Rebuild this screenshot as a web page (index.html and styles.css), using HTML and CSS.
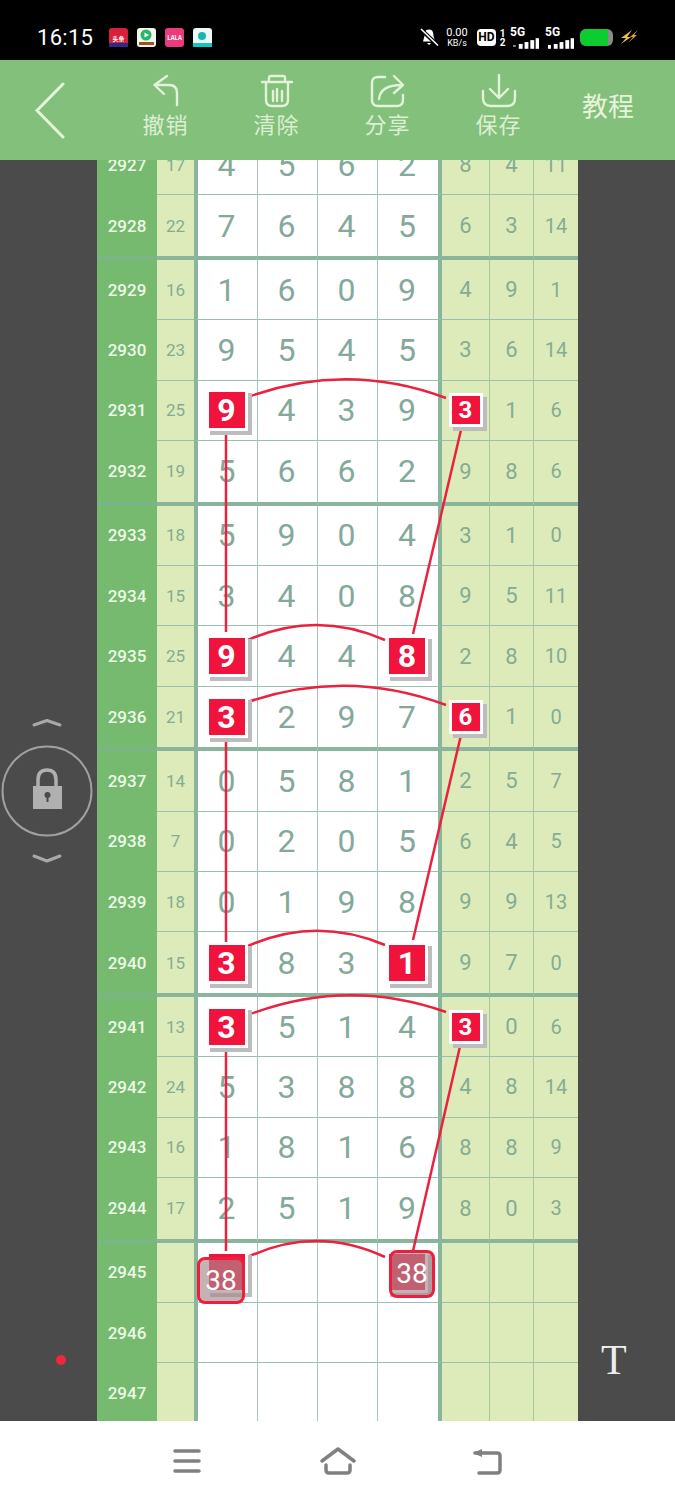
FILE: index.html
```html
<!DOCTYPE html>
<html lang="zh">
<head>
<meta charset="utf-8">
<title>教程</title>
<link rel="stylesheet" href="styles.css">
</head>
<body>
<div class="phone">
  <header class="status">
    <div class="time">16:15</div>
    <div class="apps">
      <svg class="app" viewBox="0 0 19 19"><rect width="19" height="19" rx="3" fill="#d8203c"/><rect y="15" width="19" height="4" fill="#2b2b8a"/><text class="app-text" x="9.500" y="13" text-anchor="middle">头条</text></svg>
      <svg class="app" viewBox="0 0 19 19"><rect width="19" height="19" rx="3" fill="#f4f4ee"/><circle cx="9" cy="7" r="5.500" fill="#25b864"/><path d="M7.500 4.500 L12 7 L7.500 9.500Z" fill="#fff"/><rect x="2" y="14" width="15" height="3" fill="#a05020"/></svg>
      <svg class="app" viewBox="0 0 19 19"><rect width="19" height="19" rx="3" fill="#ea3b7d"/><text class="app-text" x="9.500" y="12" text-anchor="middle">LALA</text></svg>
      <svg class="app" viewBox="0 0 19 19"><rect width="19" height="19" rx="3" fill="#eef8f6"/><circle cx="9" cy="8" r="4" fill="#18b8a8"/><rect y="15" width="19" height="4" fill="#10c8c0"/></svg>
    </div>
    <div class="sys">
      <svg class="bell" viewBox="0 0 19 19"><path d="M9 1.500 C5 1.500 4.500 5 4.500 8 L3 13.500 H15 L13.500 8 C13.500 5 13 1.500 9 1.500Z M7 15 H11 L9 17Z" fill="#fff"/><path d="M1 1.500 L18 17.500" stroke="#000" stroke-width="4"/><path d="M1 1 L18 17.500" stroke="#fff" stroke-width="1.600"/></svg>
      <div class="speed"><span class="speed-num">0.00</span><span class="speed-unit">KB/s</span></div>
      <div class="hd">HD</div>
      <div class="sim-no"><span>1</span><span>2</span></div>
      <div class="net"><span class="net-label">5G</span><svg class="bars" viewBox="0 0 27 11"><rect x="0" y="7" width="3" height="2" fill="#888"/><rect x="6" y="6" width="4" height="5" fill="#fff"/><rect x="12" y="4" width="4" height="7" fill="#fff"/><rect x="18" y="2" width="4" height="9" fill="#fff"/><rect x="23.500" y="0" width="3.500" height="11" fill="#fff"/></svg></div>
      <div class="net"><span class="net-label">5G</span><svg class="bars" viewBox="0 0 27 11"><rect x="0" y="7" width="3" height="4" fill="#fff"/><rect x="6" y="6" width="4" height="5" fill="#fff"/><rect x="12" y="4" width="4" height="7" fill="#fff"/><rect x="18" y="2" width="4" height="9" fill="#fff"/><rect x="23.500" y="0" width="3.500" height="11" fill="#fff"/></svg></div>
      <div class="battery"><div class="battery-fill"></div></div>
      <svg class="bolt" viewBox="0 0 19 16"><path d="M12 1 L1 9 H6 L1 15 L11 8 H7Z" fill="#f0c040"/><path d="M18 1 L10 8 H13 L8 14 L17 6 H14Z" fill="#e0a030"/></svg>
    </div>
  </header>

  <nav class="toolbar">
    <button class="back" aria-label="返回">
      <svg class="back-icon" viewBox="0 0 32 58"><path d="M29 2 L3 28.500 L29 55" fill="none" stroke="#e6f4da" stroke-width="3" stroke-linecap="round"/></svg>
    </button>
    <div class="tool">
      <svg class="tool-icon" viewBox="0 0 36 34"><path d="M19 2 L6.500 11 L16 20 M6.500 11 H21 C26 11 29 14 29 19 V31" fill="none" stroke="#e3f3d8" stroke-width="2.400" stroke-linecap="round" stroke-linejoin="round"/></svg>
      <span class="tool-label">撤销</span>
    </div>
    <div class="tool">
      <svg class="tool-icon" viewBox="0 0 36 34"><path d="M3 8 H33 M10 8 V3.500 Q10 2 12 2 H24 Q26 2 26 3.500 V8 M7 8 V26 Q7 32 13 32 H23 Q29 32 29 26 V8 M14 17 V27 M18 15 V27 M23 17 V27" fill="none" stroke="#e3f3d8" stroke-width="2.400" stroke-linecap="round"/></svg>
      <span class="tool-label">清除</span>
    </div>
    <div class="tool">
      <svg class="tool-icon" viewBox="0 0 36 34"><path d="M15 3 H8 Q2 3 2 9 V26 Q2 32 8 32 H27 Q33 32 33 26 V21 M9 25 C10 15 18 11 32 11 M24 2 L33 11 L24 19" fill="none" stroke="#e3f3d8" stroke-width="2.400" stroke-linecap="round" stroke-linejoin="round"/></svg>
      <span class="tool-label">分享</span>
    </div>
    <div class="tool">
      <svg class="tool-icon" viewBox="0 0 36 34"><path d="M18 1 V23 M9 15 L18 24 L27 15 M2 17 V24 Q2 32 10 32 H26 Q34 32 34 24 V17" fill="none" stroke="#e3f3d8" stroke-width="2.400" stroke-linecap="round" stroke-linejoin="round"/></svg>
      <span class="tool-label">保存</span>
    </div>
    <div class="tool-text">教程</div>
  </nav>

  <main class="stage">
    <aside class="side-left">
      <svg class="lock" viewBox="0 0 94 150">
        <path d="M34 5 L47 0.500 L60 5" fill="none" stroke="#a8a8a8" stroke-width="3" stroke-linecap="round" stroke-linejoin="round"/>
        <circle cx="47" cy="71" r="44.500" fill="none" stroke="#a0a0a0" stroke-width="2"/>
        <path d="M38 72 V60 Q38 50 47 50 Q56 50 56 60 V72" fill="none" stroke="#b0b0b0" stroke-width="3.500"/>
        <rect x="33" y="66" width="29" height="23" fill="#b0b0b0"/>
        <circle cx="47.500" cy="75" r="3" fill="#4a4a4a"/><rect x="46.500" y="75" width="2" height="7" fill="#4a4a4a"/>
        <path d="M34 136 L47 141 L60 136" fill="none" stroke="#a8a8a8" stroke-width="3" stroke-linecap="round" stroke-linejoin="round"/>
      </svg>
      <div class="dot"></div>
    </aside>

    <section class="board">
      <div class="sheet">
        <div class="row"><div class="c-no">2927</div><div class="c-sum">17</div><div class="c-main first">4</div><div class="c-main">5</div><div class="c-main">6</div><div class="c-main last">2</div><div class="c-x a">8</div><div class="c-x b">4</div><div class="c-x d">11</div></div>
        <div class="row end"><div class="c-no">2928</div><div class="c-sum">22</div><div class="c-main first">7</div><div class="c-main">6</div><div class="c-main">4</div><div class="c-main last">5</div><div class="c-x a">6</div><div class="c-x b">3</div><div class="c-x d">14</div></div>

        <div class="row"><div class="c-no">2929</div><div class="c-sum">16</div><div class="c-main first">1</div><div class="c-main">6</div><div class="c-main">0</div><div class="c-main last">9</div><div class="c-x a">4</div><div class="c-x b">9</div><div class="c-x d">1</div></div>
        <div class="row"><div class="c-no">2930</div><div class="c-sum">23</div><div class="c-main first">9</div><div class="c-main">5</div><div class="c-main">4</div><div class="c-main last">5</div><div class="c-x a">3</div><div class="c-x b">6</div><div class="c-x d">14</div></div>
        <div class="row"><div class="c-no">2931</div><div class="c-sum">25</div><div class="c-main first"><span class="mark">9</span></div><div class="c-main">4</div><div class="c-main">3</div><div class="c-main last">9</div><div class="c-x a"><span class="mark small">3</span></div><div class="c-x b">1</div><div class="c-x d">6</div></div>
        <div class="row end"><div class="c-no">2932</div><div class="c-sum">19</div><div class="c-main first">5</div><div class="c-main">6</div><div class="c-main">6</div><div class="c-main last">2</div><div class="c-x a">9</div><div class="c-x b">8</div><div class="c-x d">6</div></div>

        <div class="row"><div class="c-no">2933</div><div class="c-sum">18</div><div class="c-main first">5</div><div class="c-main">9</div><div class="c-main">0</div><div class="c-main last">4</div><div class="c-x a">3</div><div class="c-x b">1</div><div class="c-x d">0</div></div>
        <div class="row"><div class="c-no">2934</div><div class="c-sum">15</div><div class="c-main first">3</div><div class="c-main">4</div><div class="c-main">0</div><div class="c-main last">8</div><div class="c-x a">9</div><div class="c-x b">5</div><div class="c-x d">11</div></div>
        <div class="row"><div class="c-no">2935</div><div class="c-sum">25</div><div class="c-main first"><span class="mark">9</span></div><div class="c-main">4</div><div class="c-main">4</div><div class="c-main last"><span class="mark">8</span></div><div class="c-x a">2</div><div class="c-x b">8</div><div class="c-x d">10</div></div>
        <div class="row end"><div class="c-no">2936</div><div class="c-sum">21</div><div class="c-main first"><span class="mark">3</span></div><div class="c-main">2</div><div class="c-main">9</div><div class="c-main last">7</div><div class="c-x a"><span class="mark small">6</span></div><div class="c-x b">1</div><div class="c-x d">0</div></div>

        <div class="row"><div class="c-no">2937</div><div class="c-sum">14</div><div class="c-main first">0</div><div class="c-main">5</div><div class="c-main">8</div><div class="c-main last">1</div><div class="c-x a">2</div><div class="c-x b">5</div><div class="c-x d">7</div></div>
        <div class="row"><div class="c-no">2938</div><div class="c-sum">7</div><div class="c-main first">0</div><div class="c-main">2</div><div class="c-main">0</div><div class="c-main last">5</div><div class="c-x a">6</div><div class="c-x b">4</div><div class="c-x d">5</div></div>
        <div class="row"><div class="c-no">2939</div><div class="c-sum">18</div><div class="c-main first">0</div><div class="c-main">1</div><div class="c-main">9</div><div class="c-main last">8</div><div class="c-x a">9</div><div class="c-x b">9</div><div class="c-x d">13</div></div>
        <div class="row end"><div class="c-no">2940</div><div class="c-sum">15</div><div class="c-main first"><span class="mark">3</span></div><div class="c-main">8</div><div class="c-main">3</div><div class="c-main last"><span class="mark">1</span></div><div class="c-x a">9</div><div class="c-x b">7</div><div class="c-x d">0</div></div>

        <div class="row"><div class="c-no">2941</div><div class="c-sum">13</div><div class="c-main first"><span class="mark">3</span></div><div class="c-main">5</div><div class="c-main">1</div><div class="c-main last">4</div><div class="c-x a"><span class="mark small">3</span></div><div class="c-x b">0</div><div class="c-x d">6</div></div>
        <div class="row"><div class="c-no">2942</div><div class="c-sum">24</div><div class="c-main first">5</div><div class="c-main">3</div><div class="c-main">8</div><div class="c-main last">8</div><div class="c-x a">4</div><div class="c-x b">8</div><div class="c-x d">14</div></div>
        <div class="row"><div class="c-no">2943</div><div class="c-sum">16</div><div class="c-main first">1</div><div class="c-main">8</div><div class="c-main">1</div><div class="c-main last">6</div><div class="c-x a">8</div><div class="c-x b">8</div><div class="c-x d">9</div></div>
        <div class="row end"><div class="c-no">2944</div><div class="c-sum">17</div><div class="c-main first">2</div><div class="c-main">5</div><div class="c-main">1</div><div class="c-main last">9</div><div class="c-x a">8</div><div class="c-x b">0</div><div class="c-x d">3</div></div>

        <div class="row"><div class="c-no">2945</div><div class="c-sum"></div><div class="c-main first"><span class="mark blank"></span><span class="pick pick-a">38</span></div><div class="c-main"></div><div class="c-main"></div><div class="c-main last"><span class="mark blank"></span><span class="pick pick-b">38</span></div><div class="c-x a"></div><div class="c-x b"></div><div class="c-x d"></div></div>
        <div class="row"><div class="c-no">2946</div><div class="c-sum"></div><div class="c-main first"></div><div class="c-main"></div><div class="c-main"></div><div class="c-main last"></div><div class="c-x a"></div><div class="c-x b"></div><div class="c-x d"></div></div>
        <div class="row"><div class="c-no">2947</div><div class="c-sum"></div><div class="c-main first"></div><div class="c-main"></div><div class="c-main"></div><div class="c-main last"></div><div class="c-x a"></div><div class="c-x b"></div><div class="c-x d"></div></div>
      </div>

      <svg class="links" viewBox="97 160 481 1261">
        <g fill="none" stroke="#e8223f" stroke-width="2.500">
          <path d="M248 397 Q347 361 446 398"/>
          <path d="M248 640 Q316 610 385 640"/>
          <path d="M248 702 Q347 668 446 705"/>
          <path d="M248 946 Q316 916 385 945"/>
          <path d="M248 1015 Q347 977 446 1012"/>
          <path d="M248 1257 Q316 1225 385 1257"/>
          <path d="M226 432 V632"/>
          <path d="M226 736 V942"/>
          <path d="M226 1048 V1256"/>
          <path d="M461 430 L413 634"/>
          <path d="M461 735 L413 940"/>
          <path d="M461 1042 L413 1251"/>
        </g>
      </svg>
    </section>

    <aside class="side-right"><div class="font-btn">T</div></aside>
  </main>

  <footer class="navbar">
    <svg class="nav-menu" viewBox="0 0 28 24"><path d="M2 2 H26 M2 12 H26 M2 22 H26" stroke="#808080" stroke-width="3.500" stroke-linecap="round"/></svg>
    <svg class="nav-home" viewBox="0 0 36 28"><path d="M2 14 L18 2 L34 14 M6 18 V23 Q6 26 9 26 H27 Q30 26 30 23 V18" fill="none" stroke="#808080" stroke-width="3.500" stroke-linecap="round" stroke-linejoin="round"/></svg>
    <svg class="nav-back" viewBox="0 0 32 28"><path d="M2 6 L11 2 V10Z" fill="#808080"/><path d="M4 6 H26 Q29 6 29 9 V23 Q29 26 26 26 H8" fill="none" stroke="#808080" stroke-width="3.500" stroke-linecap="round"/></svg>
  </footer>
</div>
</body>
</html>
```

FILE: styles.css
```css
* { box-sizing: border-box; }
html, body { margin: 0; padding: 0; }
body { font-family: "Roboto", "Noto Sans CJK SC", sans-serif; background: #fff; }
.phone { width: 675px; height: 1500px; display: flex; flex-direction: column; overflow: hidden; }

/* status bar */
.status { height: 60px; background: #000; color: #fff; display: flex; align-items: center; padding: 15px 0 0 37px; flex: none; }
.time { font-size: 22px; width: 72px; letter-spacing: .3px; }
.apps { display: flex; gap: 9px; }
.app { width: 19px; height: 19px; display: block; }
.app-text { font: 700 6px "Noto Sans CJK SC", sans-serif; fill: #fff; }
.sys { margin-left: 208px; display: flex; align-items: center; }
.bell { width: 19px; height: 19px; }
.speed { display: flex; flex-direction: column; align-items: center; width: 24px; margin-left: 6px; line-height: 10px; }
.speed-num { font-size: 11px; }
.speed-unit { font-size: 9px; }
.hd { width: 19px; height: 17px; background: #fff; color: #000; border-radius: 4px; font: 700 12px/17px "Roboto", sans-serif; text-align: center; margin-left: 8px; }
.sim-no { display: flex; flex-direction: column; font: 700 10px/9px "Roboto", sans-serif; width: 9px; margin-left: 2px; text-align: center; }
.net { position: relative; width: 28px; height: 22px; margin-left: 3px; }
.net-label { position: absolute; left: 0; top: -1px; font: 700 12px/12px "Roboto", sans-serif; }
.bars { position: absolute; left: 3px; top: 11px; width: 26px; height: 11px; }
.net + .net { margin-left: 7px; }
.battery { width: 33px; height: 17px; margin-left: 7px; background: #8a8a8a; border-radius: 6px; overflow: hidden; }
.battery-fill { width: 28px; height: 17px; background: #0ccc30; border-radius: 6px 2px 2px 6px; }
.bolt { width: 19px; height: 16px; margin-left: 7px; margin-top: -2px; }

/* toolbar */
.toolbar { height: 100px; background: #82c07b; display: flex; flex: none; }
.back { width: 110px; height: 100px; border: 0; background: none; padding: 22px 0 0 34px; display: flex; align-items: flex-start; }
.back-icon { width: 32px; height: 58px; display: block; }
.tool { width: 111px; display: flex; flex-direction: column; align-items: center; padding-top: 14px; }
.tool-icon { width: 36px; height: 34px; display: block; }
.tool-label { font: 400 22px/30px "Noto Sans CJK SC", sans-serif; color: #dcefd2; letter-spacing: 1px; }
.tool-text { width: 111px; padding-right: 3px; text-align: center; font: 400 26px/90px "Noto Sans CJK SC", sans-serif; color: #e6f4dc; }

/* main */
.stage { height: 1261px; display: flex; flex: none; background: #4b4b4b; overflow: hidden; }
.side-left { width: 97px; flex: none; padding-top: 560px; }
.lock { width: 94px; height: 150px; display: block; overflow: visible; }
.dot { width: 10px; height: 10px; border-radius: 50%; background: #f0263c; margin: 485px 0 0 56px; }
.side-right { width: 97px; flex: none; padding: 1175px 0 0 23px; }
.font-btn { font: 400 42px/50px "Liberation Serif", serif; color: #eee; }

.board { width: 481px; flex: none; position: relative; overflow: hidden; }
.sheet { margin-top: -25px; }
.row { display: flex; height: 60.4px; }
.row.end { height: 64.5px; }
.row > div { display: flex; align-items: center; justify-content: center; border-bottom: 1px solid #9dbfae; }
.row.end > div { border-bottom: 4px solid #8ab59d; }
.c-no { width: 60px; background: #75ba6f; color: #eef8e6; font: 500 17px "Roboto", sans-serif; }
.row > .c-no { border-bottom-color: #75ba6f; }
.row.end > .c-no { border-bottom-color: #7ab587; }
.c-sum { width: 37px; background: #dcebb9; color: #86ab93; font-size: 17px; }
.c-main { width: 60px; padding-right: 2px; background: #fff; color: #84a99b; font-size: 32px; border-left: 1px solid #a9c4ba; position: relative; }
.c-main.first { width: 63px; border-left: 4px solid #8ab59d; }
.c-main.last { width: 65px; border-right: 4px solid #8ab59d; }
.c-x { background: #dcebb9; color: #86ab93; font-size: 22px; border-left: 1px solid #a9c79d; }
.c-x.a { width: 47px; border-left: 0; }
.c-x.b { width: 44px; }
.c-x.d { width: 45px; font-size: 20px; }

.mark { position: relative; z-index: 2; width: 36px; height: 36px; background: #f0143c; color: #fff; font-weight: 700; font-size: 32px; line-height: 36px; text-align: center; box-shadow: 0 0 0 3px #fff, 4px 4px 0 3px #bdbdbd; }
.mark.small { width: 28px; height: 28px; font-size: 24px; line-height: 28px; }
.pick { position: absolute; z-index: 3; display: flex; align-items: center; justify-content: center; border: 3px solid #ec1f3e; border-radius: 8px; background: rgba(166, 137, 140, .65); color: #fff; font-size: 28px; font-weight: 400; }
.pick-a { left: -1px; top: 14px; width: 48px; height: 47px; }
.pick-b { left: 11px; top: 7px; width: 46px; height: 48px; }

.links { position: absolute; left: 0; top: 0; width: 481px; height: 1261px; z-index: 1; pointer-events: none; }

/* nav bar */
.navbar { height: 79px; background: #fff; flex: none; display: flex; align-items: center; padding: 0 0 0 173px; }
.nav-menu { width: 28px; height: 24px; }
.nav-home { width: 36px; height: 28px; margin-left: 119px; }
.nav-back { width: 32px; height: 28px; margin-left: 115px; }
```
